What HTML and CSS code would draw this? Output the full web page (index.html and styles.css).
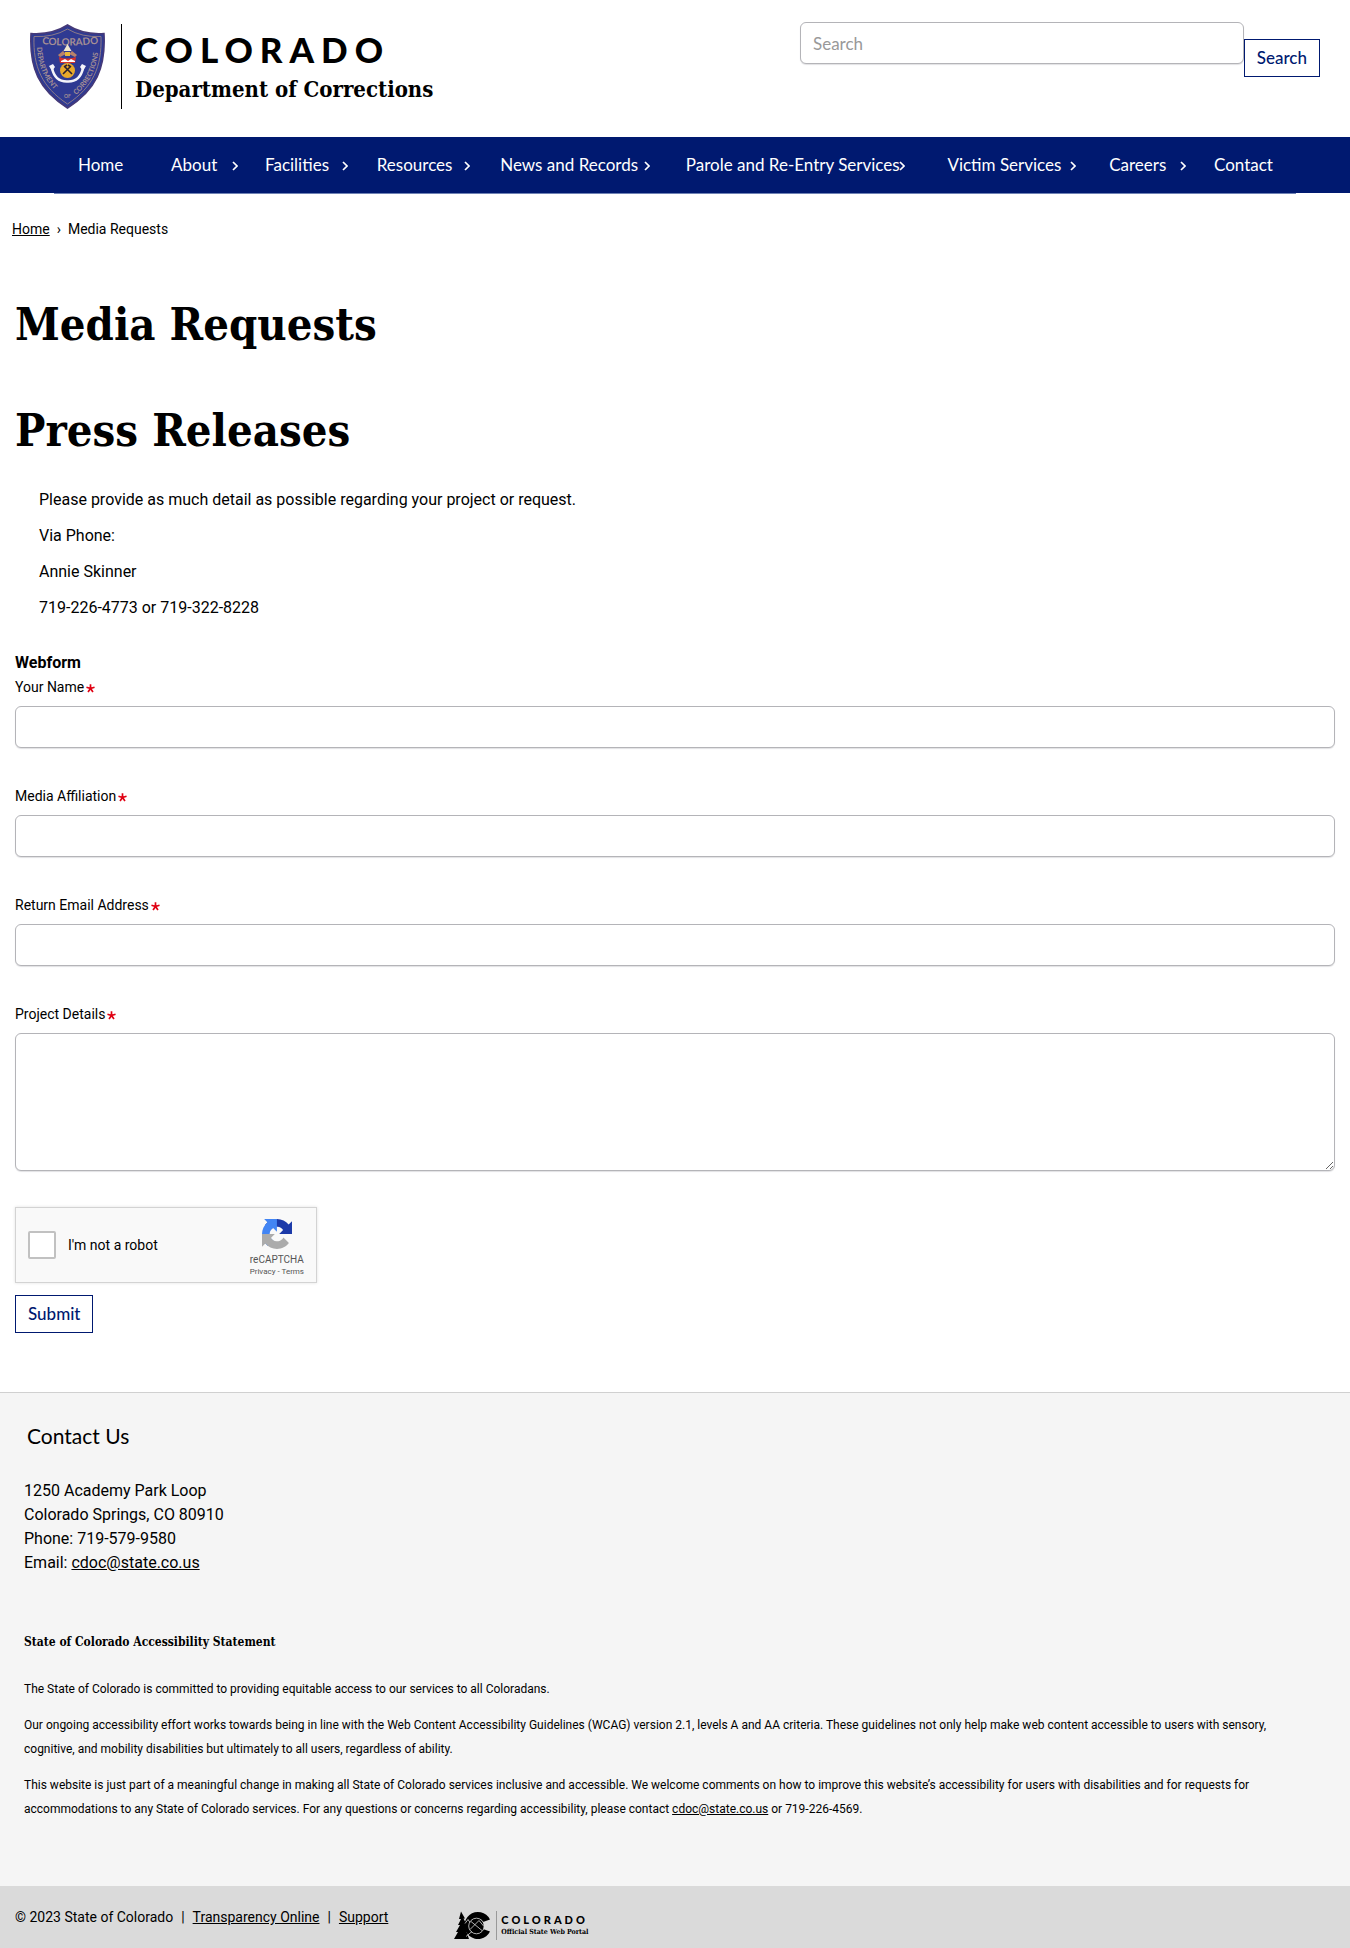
FILE: index.html
```html
<!DOCTYPE html>
<html lang="en">
<head>
<meta charset="utf-8">
<meta name="viewport" content="width=device-width, initial-scale=1">
<title>Media Requests | Department of Corrections</title>
<link rel="stylesheet" href="styles.css">
</head>
<body>
<svg class="sprite" aria-hidden="true">
  <symbol id="chevron" viewBox="0 0 6 10"><path d="M1 1l4 4-4 4" fill="none" stroke="currentColor" stroke-width="1.7"/></symbol>
  <symbol id="star" viewBox="0 0 8 8"><path d="M4 4V.2M4 4L.4 2.9M4 4l3.6-1.1M4 4L1.8 7.2M4 4l2.2 3.2" fill="none" stroke="currentColor" stroke-width="1.5"/></symbol>
</svg>

<header class="header">
  <a class="brand" href="#">
    <svg class="shield" viewBox="0 0 75 85" aria-label="Colorado Department of Corrections shield">
      <defs>
        <path id="arc-top" d="M12 20Q37 23 65 20"/>
        <path id="arc-left" d="M7 23C8 45 16 59 32 73"/>
        <path id="arc-right" d="M46 71C61 58 67 44 69 21"/>
      </defs>
      <path d="M1 9.500Q22 11 37.500 1Q53 11 74 9.500C76 44 66 66 37.500 84C9 66 -1 44 1 9.500Z" fill="#2f3a92" stroke="#463a78" stroke-width="1.500"/>
      <path d="M4 12.500Q23 13.500 37.500 5Q52 13.500 71 12.500C72 43 63 63 37.500 80C12 63 3 43 4 12.500Z" fill="none" stroke="#8c7a88" stroke-width="1"/>
      <g class="shield-text">
        <text><textPath href="#arc-top">COLORADO</textPath></text>
        <text class="shield-side"><textPath href="#arc-left">DEPARTMENT</textPath></text>
        <text class="shield-side"><textPath href="#arc-right">CORRECTIONS</textPath></text>
        <text class="shield-of" x="34" y="74">OF</text>
      </g>
      <path d="M37.500 20l4 7h-8z" fill="#efe6cf"/>
      <path d="M28 31l5-4 3 3-6 3zM47 31l-5-4-3 3 6 3z" fill="#b9836a"/>
      <path d="M35 28h5v4h-5z" fill="#e6b53c"/>
      <path d="M29 33q8 3 17 0l-1 6h-15z" fill="#d8322c"/>
      <path d="M31 37l4-2 3 2 3-2 4 2v1H31z" fill="#fff"/>
      <circle cx="37.500" cy="46.500" r="7.500" fill="#e8a92b"/>
      <path d="M33 50l7-7M42 50l-7-7M34 43l3-2M41 43l-3-2" stroke="#2b2030" stroke-width="1.600" fill="none"/>
      <path d="M22 44Q25 58 37.500 57.500Q50 58 53 44" fill="none" stroke="#f4f4fa" stroke-width="2.500"/>
      <path d="M19 42l4-2 2 3-3 4zM56 42l-4-2-2 3 3 4z" fill="#f4f4fa"/>
    </svg>
    <span class="brand-words">
      <span class="brand-state">COLORADO</span>
      <span class="brand-dept">Department of Corrections</span>
    </span>
  </a>
  <form class="search" role="search">
    <input class="text-box search-box" type="search" placeholder="Search" aria-label="Search">
    <button class="button search-button" type="submit">Search</button>
  </form>
</header>

<nav class="nav" aria-label="Main">
  <ul class="nav-list">
    <li class="nav-item"><a href="#">Home</a></li>
    <li class="nav-item"><a href="#">About</a><svg class="nav-chevron"><use href="#chevron"/></svg></li>
    <li class="nav-item"><a href="#">Facilities</a><svg class="nav-chevron"><use href="#chevron"/></svg></li>
    <li class="nav-item"><a href="#">Resources</a><svg class="nav-chevron"><use href="#chevron"/></svg></li>
    <li class="nav-item"><a href="#">News and Records</a><svg class="nav-chevron"><use href="#chevron"/></svg></li>
    <li class="nav-item"><a href="#">Parole and Re-Entry Services</a><svg class="nav-chevron"><use href="#chevron"/></svg></li>
    <li class="nav-item"><a href="#">Victim Services</a><svg class="nav-chevron"><use href="#chevron"/></svg></li>
    <li class="nav-item"><a href="#">Careers</a><svg class="nav-chevron"><use href="#chevron"/></svg></li>
    <li class="nav-item"><a href="#">Contact</a></li>
  </ul>
</nav>

<div class="breadcrumb"><a href="#">Home</a><span>›</span><span>Media Requests</span></div>

<main class="main">
  <h1 class="title">Media Requests</h1>
  <h1 class="title">Press Releases</h1>
  <div class="intro">
    <p>Please provide as much detail as possible regarding your project or request.</p>
    <p>Via Phone:</p>
    <p>Annie Skinner</p>
    <p>719-226-4773 or 719-322-8228</p>
  </div>
  <form class="webform">
    <h2 class="form-title">Webform</h2>
    <div class="field">
      <label for="name">Your Name<svg class="required"><use href="#star"/></svg></label>
      <input class="text-box" id="name" type="text">
    </div>
    <div class="field">
      <label for="media">Media Affiliation<svg class="required"><use href="#star"/></svg></label>
      <input class="text-box" id="media" type="text">
    </div>
    <div class="field">
      <label for="email">Return Email Address<svg class="required"><use href="#star"/></svg></label>
      <input class="text-box" id="email" type="email">
    </div>
    <div class="field">
      <label for="details">Project Details<svg class="required"><use href="#star"/></svg></label>
      <textarea class="text-box text-area" id="details"></textarea>
    </div>
    <div class="captcha">
      <input class="captcha-box" type="checkbox" id="robot">
      <label class="captcha-label" for="robot">I'm not a robot</label>
      <div class="captcha-brand">
        <svg class="captcha-logo" viewBox="0 0 64 64" aria-hidden="true">
          <path fill="#1c3aa9" d="M64 31.955l-.033-1.37V4.687l-7.16 7.16C50.948 4.674 42.033.093 32.05.093c-10.4 0-19.622 4.96-25.458 12.64l11.736 11.86a15.55 15.55 0 0 1 4.754-5.334c2.05-1.6 4.952-2.906 8.968-2.906.485 0 .86.057 1.135.163 4.976.393 9.288 3.14 11.828 7.124l-8.307 8.307L64 31.955"/>
          <path fill="#4285f4" d="M31.862.094l-1.37.033H4.594l7.16 7.16C4.58 13.147 0 22.06 0 32.046c0 10.4 4.96 19.622 12.64 25.458L24.5 45.768a15.55 15.55 0 0 1-5.334-4.754c-1.6-2.05-2.906-4.952-2.906-8.968 0-.485.057-.86.163-1.135.393-4.976 3.14-9.288 7.124-11.828l8.307 8.307L31.862.094"/>
          <path fill="#ababab" d="M.001 32.045l.033 1.37v25.9l7.16-7.16c5.86 7.173 14.774 11.754 24.76 11.754 10.4 0 19.622-4.96 25.458-12.64l-11.736-11.86a15.55 15.55 0 0 1-4.754 5.334c-2.05 1.6-4.952 2.906-8.968 2.906-.485 0-.86-.057-1.135-.163-4.976-.393-9.288-3.14-11.828-7.124l8.307-8.307L.001 32.045"/>
        </svg>
        <span class="captcha-name">reCAPTCHA</span>
        <span class="captcha-links"><a href="#">Privacy</a> - <a href="#">Terms</a></span>
      </div>
    </div>
    <button class="button" type="submit">Submit</button>
  </form>
</main>

<footer class="footer">
  <h2 class="footer-title">Contact Us</h2>
  <address class="address">1250 Academy Park Loop<br>Colorado Springs, CO 80910<br>Phone: 719-579-9580<br>Email: <a href="#">cdoc@state.co.us</a></address>
  <h3 class="statement-title">State of Colorado Accessibility Statement</h3>
  <div class="statement">
    <p>The State of Colorado is committed to providing equitable access to our services to all Coloradans.</p>
    <p>Our ongoing accessibility effort works towards being in line with the Web Content Accessibility Guidelines (WCAG) version 2.1, levels A and AA criteria. These guidelines not only help make web content accessible to users with sensory, cognitive, and mobility disabilities but ultimately to all users, regardless of ability.</p>
    <p>This website is just part of a meaningful change in making all State of Colorado services inclusive and accessible. We welcome comments on how to improve this website’s accessibility for users with disabilities and for requests for accommodations to any State of Colorado services. For any questions or concerns regarding accessibility, please contact <a href="#">cdoc@state.co.us</a> or 719-226-4569.</p>
  </div>
</footer>

<div class="bottom">
  <div class="legal">
    <span>© 2023 State of Colorado</span><span>|</span><a href="#">Transparency Online</a><span>|</span><a href="#">Support</a>
  </div>
  <a class="portal" href="#">
    <svg class="portal-mark" viewBox="0 0 38 28" aria-hidden="true">
      <path d="M7 0l4 7-1.500 0 3 6-1.500 0 3 6-2 0 3 8.500H0l4-7H2l4-7H4l3-6H5z"/>
      <path d="M36 8A13.500 13.500 0 1 0 36 20L29 17.500A6 6 0 1 1 29 10.500Z"/>
      <circle cx="22.500" cy="14.500" r="7.500"/>
      <g fill="none" stroke="#dadada" stroke-width=".8">
        <circle cx="22.500" cy="14.500" r="7.800"/>
        <path d="M11 12l3-4 2 3M16 18l9-9 5 6M17 10l11 9M12 25l6-5"/>
      </g>
    </svg>
    <span class="portal-words">
      <span class="portal-state">COLORADO</span>
      <span class="portal-name">Official State Web Portal</span>
    </span>
  </a>
</div>
</body>
</html>
```
FILE: styles.css
```css
* { box-sizing: border-box; }

body {
  margin: 0;
  background: #fff;
  color: #000;
  font: 16px/24px Roboto, "Liberation Sans", sans-serif;
}

a { color: inherit; }
p, h1, h2, h3 { margin: 0; }
.sprite { display: none; }

/* Header */
.header {
  display: flex;
  justify-content: space-between;
  align-items: flex-start;
  padding: 22px 30px 28px;
}
.brand { display: flex; padding-top: 2px; text-decoration: none; }
.shield { width: 75px; height: 85px; }
.shield-text { font: bold 10px Lato, sans-serif; fill: #a58f94; }
.shield-side { font-size: 7px; }
.shield-of { font-size: 5px; }
.brand-words {
  display: flex;
  flex-direction: column;
  gap: 8px;
  margin-left: 16px;
  padding: 7px 0 0 13px;
  border-left: 1px solid #000;
}
.brand-state { font: 900 35px/36px Lato, sans-serif; letter-spacing: 7px; }
.brand-dept { font: bold 22px/28px "DejaVu Serif Condensed", "DejaVu Serif", serif; }
.search { display: flex; width: 520px; align-items: flex-start; }
.search-box { flex: 1; min-width: 0; }
.search-button { margin-top: 17px; }

.text-box {
  display: block;
  width: 100%;
  height: 42px;
  margin: 0;
  padding: 0 12px;
  border: 1px solid #b4b4b8;
  border-radius: 6px;
  background: #fff;
  font: 17px/24px Lato, sans-serif;
  box-shadow: 0 1px 1px #e2e2e4;
}
.text-box::placeholder { color: #999; }
.text-area { height: 138px; resize: vertical; }

.button {
  height: 38px;
  padding: 0 12px;
  border: 1px solid #001970;
  background: #fff;
  color: #001970;
  font: 500 17px/24px Lato, sans-serif;
}

/* Navigation */
.nav { background: #001970; color: #fff; }
.nav-list {
  display: flex;
  justify-content: space-between;
  height: 56px;
  margin: 0 54px;
  padding: 0;
  list-style: none;
  font: 17px/56px Lato, sans-serif;
  box-shadow: 0 1px #6f82b4;
}
.nav-item { position: relative; padding: 0 23px 0 24px; white-space: nowrap; }
.nav-item a { text-decoration: none; }
.nav-chevron { position: absolute; left: 91%; top: 24px; width: 6px; height: 10px; }

/* Content */
.breadcrumb { display: flex; gap: 7px; padding: 24px 12px 0; font-size: 14px; }
.main { padding: 54px 15px 59px; }
.title {
  margin-bottom: 46px;
  font: bold 45px/60px "DejaVu Serif Condensed", "DejaVu Serif", serif;
}
.title + .title { margin-bottom: 27px; }
.intro {
  display: flex;
  flex-direction: column;
  gap: 12px;
  padding: 0 24px 31px;
}
.form-title { font-size: 16px; line-height: 24px; }
.field { margin-bottom: 36px; }
.field label { display: block; margin-bottom: 7px; font-size: 14px; }
.required { width: 9px; height: 9px; margin-left: 2px; color: #e00012; vertical-align: -1px; }

.captcha {
  display: flex;
  align-items: center;
  width: 302px;
  height: 76px;
  margin-bottom: 12px;
  padding: 0 12px;
  border: 1px solid #d3d3d3;
  background: #f9f9f9;
  box-shadow: 0 0 3px rgba(0, 0, 0, .12);
}
.captcha-box {
  appearance: none;
  width: 28px;
  height: 28px;
  margin: 0 12px 0 0;
  border: 2px solid #c1c1c1;
  border-radius: 2px;
  background: #fff;
}
.captcha-label { flex: 1; font-size: 14px; }
.captcha-brand { display: flex; flex-direction: column; align-items: center; padding-top: 6px; color: #555; }
.captcha-logo { width: 30px; height: 30px; margin-bottom: 4px; }
.captcha-name { font-size: 10px; line-height: 14px; }
.captcha-links { font-size: 8px; line-height: 10px; }
.captcha-links a { text-decoration: none; }

/* Footer */
.footer {
  padding: 29px 48px 65px 24px;
  border-top: 1px solid #d0d0d0;
  background: #f5f5f5;
}
.footer-title { margin: 0 0 29px 3px; font: 21px/28px Lato, sans-serif; }
.address { margin-bottom: 55px; font-style: normal; }
.statement-title {
  margin-bottom: 23px;
  font: bold 12px/24px "DejaVu Serif Condensed", "DejaVu Serif", serif;
}
.statement { display: flex; flex-direction: column; gap: 12px; font-size: 12px; }

.bottom {
  display: flex;
  align-items: flex-start;
  gap: 66px;
  padding: 19px 15px 8px;
  background: #dadada;
  font-size: 14px;
}
.legal { display: flex; gap: 8px; }
.portal { display: flex; gap: 4px; padding-top: 6px; text-decoration: none; }
.portal-mark { width: 38px; height: 29px; }
.portal-words {
  display: flex;
  flex-direction: column;
  padding: 2px 0 0 4px;
  border-left: 1px solid #999;
}
.portal-state { font: 900 11px/14px Lato, sans-serif; letter-spacing: 3px; }
.portal-name { font: bold 7px/10px "DejaVu Serif Condensed", "DejaVu Serif", serif; }
```
